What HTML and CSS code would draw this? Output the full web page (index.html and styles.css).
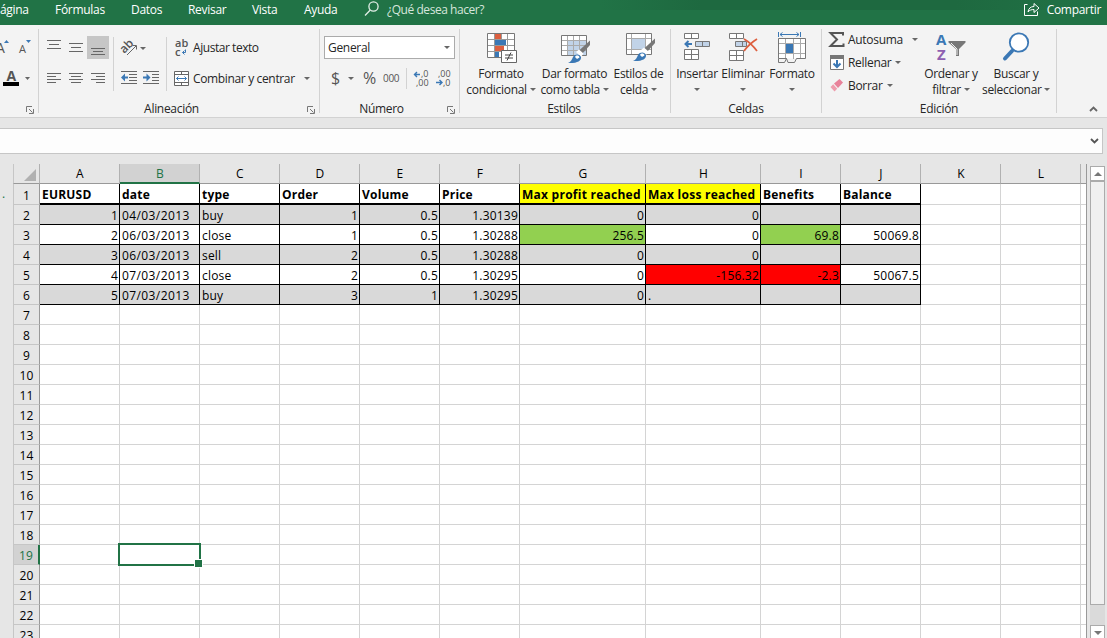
FILE: index.html
```html
<!DOCTYPE html>
<html lang="es">
<head>
<meta charset="utf-8">
<title>EURUSD</title>
<link rel="stylesheet" href="styles.css">
</head>

<body>

<div class="titleBar">
	<div class="tab tabPagina">ágina</div>
	<div class="tab tabFormulas">Fórmulas</div>
	<div class="tab tabDatos">Datos</div>
	<div class="tab tabRevisar">Revisar</div>
	<div class="tab tabVista">Vista</div>
	<div class="tab tabAyuda">Ayuda</div>
	<div class="tellMe">
		<svg width="16" height="18" fill="none" stroke="#e4efe8" stroke-width="1.3"><circle cx="9.5" cy="6.5" r="4.6"/><path d="M6.3 10 L1 15.5"/></svg>
		<span class="tellText">¿Qué desea hacer?</span>
	</div>
	<div class="share">
		<svg width="16" height="17" fill="none" stroke="#fff"><path d="M3.500 4.500H.5V15.500H13.500V11.500"/><path d="M4 12C4.500 8.500 6.500 6.500 10 6.500V3.500L15 8L10 12.500V9.500C7.500 9.500 5.500 10 4 12Z"/></svg>
		<span>Compartir</span>
	</div>
</div>

<div class="ribbon">

	<div class="group groupFont">
		<div class="fontRow">
			<svg width="38" height="24"><text x="-4" y="17" class="iconText" font-size="14">A</text><path d="M4 7 L6.500 4 L9 7 Z" fill="#3b78b5"/><text x="19" y="17" class="iconText" font-size="11">A</text><path d="M26 4 H31 L28.500 7 Z" fill="#3b78b5"/></svg>
			<svg width="38" height="24"><text x="6.500" y="15" class="iconText" font-size="14" font-weight="bold">A</text><path d="M3 16 H19 V20 H3 Z" fill="#000"/><path d="M25 11 H30 L27.500 14 Z" fill="#666"/></svg>
		</div>
		<div class="groupLabel"><span></span><svg class="launcher" width="8" height="8"><use href="#launch"/></svg></div>
	</div>

	<div class="group groupAlign">
		<div class="groupBody">
			<div class="alignIcons">
				<div class="iconCell"><svg width="14" height="16"><path class="ln" d="M0 .5H14M2 4.500H12M0 8.500H14"/></svg></div>
				<div class="iconCell"><svg width="14" height="16"><path class="ln" d="M0 3.500H14M2 7.500H12M0 11.500H14"/></svg></div>
				<div class="iconCell pressed"><svg width="14" height="16"><path class="ln" d="M0 8.500H14M2 11.500H12M0 14.500H14"/></svg></div>
				<div class="iconCell"><svg width="14" height="14"><path class="ln" d="M0 2.500H14M0 5.500H9M0 8.500H14M0 11.500H9"/></svg></div>
				<div class="iconCell"><svg width="14" height="14"><path class="ln" d="M0 2.500H14M2 5.500H12M0 8.500H14M2 11.500H12"/></svg></div>
				<div class="iconCell"><svg width="14" height="14"><path class="ln" d="M0 2.500H14M5 5.500H14M0 8.500H14M5 11.500H14"/></svg></div>
			</div>
			<div class="indentIcons">
				<div class="indentRow">
					<svg width="18" height="18"><text x="-1" y="11" class="iconText strong" font-size="12" transform="rotate(-45 6 8)">ab</text><path d="M6 16 L15 7 M11.500 6.500 H15.500 V10.500" fill="none" stroke="#666"/></svg>
					<i class="caret"></i>
				</div>
				<div class="indentRow indentLower">
					<svg width="17" height="14"><path class="ln" d="M0 .5H16M8 3.500H16M8 6.500H16M8 9.500H16M0 12.500H16"/><path d="M0 6.500 L4 2.500 V5.500 H7 V7.500 H4 V10.500Z" fill="#3b78b5"/></svg>
					<svg width="17" height="14" class="indentMore"><path class="ln" d="M0 .5H16M9 3.500H16M9 6.500H16M9 9.500H16M0 12.500H16"/><path d="M7.500 6.500 L3.500 2.500 V5.500 H0 V7.500 H3.500 V10.500Z" fill="#3b78b5"/></svg>
				</div>
			</div>
			<div class="wrapButtons">
				<div class="wrapRow"><svg width="17" height="18"><text class="iconText strong" font-size="11"><tspan x="2" y="8">ab</tspan><tspan x="2" y="17">c</tspan></text><path d="M12.500 10.500 V13.500 H9.500 M11.500 11.500 L9.500 13.500 L11.500 15.500" fill="none" stroke="#3b78b5"/></svg><span class="wrapText">Ajustar texto</span></div>
				<div class="wrapRow"><svg width="17" height="16"><path d="M1.500 .5H15.500V14.500H1.500ZM1.500 3.500H15.500M1.500 11.500H15.500M8.500 .5V3.500M8.500 11.500V14.500" fill="#fff" stroke="#666"/><path d="M3.500 7.500H13.500M5.500 5.500L3.500 7.500L5.500 9.500M11.500 5.500L13.500 7.500L11.500 9.500" fill="none" stroke="#3b78b5"/></svg><span class="mergeText">Combinar y centrar</span><i class="caret"></i></div>
			</div>
		</div>
		<div class="groupLabel"><span>Alineación</span><svg class="launcher" width="8" height="8"><use href="#launch"/></svg></div>
	</div>

	<div class="group groupNumber">
		<div class="numberBody">
			<div class="combo"><span>General</span><i class="caret"></i></div>
			<div class="numberIcons">
				<span class="dollar">$</span><i class="caret"></i><span class="percent">%</span><span class="thousands">000</span>
				<div class="decimals"><svg width="38" height="18"><text class="iconText" font-size="9"><tspan x="7" y="7">,0</tspan><tspan x="2" y="16">,00</tspan></text><path d="M.5 4.500H6M3 2L.5 4.500L3 7" class="blueLn"/><text class="iconText" font-size="9"><tspan x="24" y="7">,00</tspan><tspan x="29" y="16">,0</tspan></text><path d="M22 12.500H28M25.500 10L28 12.500L25.500 15" class="blueLn"/></svg></div>
			</div>
		</div>
		<div class="groupLabel"><span class="numLabel">Número</span><svg class="launcher" width="8" height="8"><use href="#launch"/></svg></div>
	</div>

	<div class="group groupStyles">
		<div class="bigButtons">
			<div class="bigButton wFormato">
				<svg width="30" height="32"><path d="M.5 1.500H27.500V25.500H.5Z" fill="#fff"/><path d="M.5 7.500H27.500M.5 13.500H27.500M.5 19.500H27.500M7.500 1.500V25.500M14.500 1.500V25.500M20.500 1.500V25.500" fill="none" stroke="#999"/><path d="M8 2H14V7H8ZM8 14H17V19H8Z" fill="#dd5f3f"/><path d="M8 8H19V13H8ZM8 20H12V25H8Z" fill="#3b78b5"/><path d="M.5 1.500H27.500V25.500H.5Z" fill="none" stroke="#777"/><path d="M14.500 18.500H29.500V30.500H14.500Z" fill="#fff" stroke="#666"/><path d="M18 23H26M18 26H26M24 20.500L20 28.500" stroke="#444" fill="none"/></svg>
				<div>Formato</div><div>condicional <i class="caret"></i></div>
			</div>
			<div class="bigButton wTabla">
				<svg width="30" height="32"><path d="M.5 3.500H25.500V23.500H.5Z" fill="#fff"/><path d="M7 9H25V23H7Z" fill="#c1d3e8"/><path d="M.5 8.500H25.500M.5 13.500H25.500M.5 18.500H25.500M6.500 3.500V23.500M12.500 3.500V23.500M18.500 3.500V23.500" stroke="#aaa"/><path d="M.5 3.500H25.500V23.500H.5Z" fill="none" stroke="#777"/><use href="#brush"/></svg>
				<div>Dar formato</div><div>como tabla <i class="caret"></i></div>
			</div>
			<div class="bigButton wEstilos">
				<svg width="30" height="32"><path d="M.5 1.500H25.500V22.500H.5Z" fill="#fff"/><path d="M6 7H19V17H6Z" fill="#c1d3e8"/><path d="M.5 6.500H25.500M.5 17.500H25.500M5.500 1.500V22.500M19.500 1.500V22.500" stroke="#aaa"/><path d="M.5 1.500H25.500V22.500H.5Z" fill="none" stroke="#777"/><use href="#brush" y="-2"/></svg>
				<div>Estilos de</div><div>celda <i class="caret"></i></div>
			</div>
		</div>
		<div class="groupLabel"><span>Estilos</span></div>
	</div>

	<div class="group groupCells">
		<div class="bigButtons">
			<div class="bigButton wInsertar">
				<svg width="27" height="32"><g fill="#fff" stroke="#777"><path d="M.5 1.500H14.500V6.500H.5ZM7.500 1.500V6.500M.5 17.500H14.500V27.500H.5ZM.5 22.500H14.500M7.500 17.500V27.500"/><path d="M11.500 9.500H25.500V14.500H11.500ZM18.500 9.500V14.500" fill="#c1d3e8"/></g><path d="M1.500 12H8M4.500 9L1.500 12L4.500 15" fill="none" stroke="#3b78b5" stroke-width="2"/></svg>
				<div>Insertar</div><div><i class="caret"></i></div>
			</div>
			<div class="bigButton wEliminar">
				<svg width="30" height="32"><g fill="#fff" stroke="#777"><path d="M1.500 1.500H15.500V6.500H1.500ZM8.500 1.500V6.500M1.500 18.500H15.500V28.500H1.500ZM1.500 23.500H15.500M8.500 18.500V28.500"/><path d="M7.500 9.500H18.500V14.500H7.500ZM14.500 9.500V14.500" fill="#c1d3e8"/></g><path d="M16 7Q23 11 29 19M29 7Q21 12 16 19" fill="none" stroke="#dd5f3f" stroke-width="1.800"/></svg>
				<div>Eliminar</div><div><i class="caret"></i></div>
			</div>
			<div class="bigButton wCelda">
				<svg width="29" height="32"><path d="M.5 6.500H27.500V26.500H.5Z" fill="#fff"/><path d="M0 11.500H27M0 21.500H27M7.500 7V27M15.500 7V27M22.500 7V27" stroke="#aaa"/><path d="M8 12H15V21H8Z" fill="#3b78b5"/><path d="M.5 6.500H27.500V26.500H18.500L16.500 30.500H10L8.500 26.500H.5ZM.5 26.500V30.500H6.500L8.500 26.500" fill="none" stroke="#777"/><path d="M.5 0V5M22.500 0V5M2 2.500H21M4.500 .5L2 2.500L4.500 4.500M18.500 .5L21 2.500L18.500 4.500" fill="none" stroke="#3b78b5"/></svg>
				<div>Formato</div><div><i class="caret"></i></div>
			</div>
		</div>
		<div class="groupLabel"><span>Celdas</span></div>
	</div>

	<div class="group groupEdit">
		<div class="groupBody">
			<div class="editList">
				<div class="editRow rowSum"><svg width="16" height="15"><path d="M15 3.500V1H2.500L9 7.500L2.500 14H15.500V11.500" fill="none" stroke="#555" stroke-width="2"/></svg><span>Autosuma</span><i class="caret"></i></div>
				<div class="editRow"><svg width="16" height="15"><path d="M2.500 .5H15.500V14.500H2.500Z" fill="#fff" stroke="#777"/><path d="M2 0H16V4H2Z" fill="#777"/><path d="M9 5V12M5.500 8.500L9 12L12.500 8.500" fill="none" stroke="#3b78b5" stroke-width="2"/></svg><span>Rellenar</span><i class="caret"></i></div>
				<div class="editRow"><svg width="16" height="15"><path d="M6 5.500L11.500 1L15 4.500L10 10Z" fill="#e8829a"/><path d="M5.200 6.300L9.200 10.800L6.500 13.500L2.500 9Z" fill="#ee9dad"/></svg><span>Borrar</span><i class="caret"></i></div>
			</div>
			<div class="bigButton wOrdenar">
				<svg width="31" height="32"><text class="iconText" font-size="15" font-weight="bold"><tspan x="0" y="13" class="letterA">A</tspan><tspan x="1" y="28" class="letterZ">Z</tspan></text><path d="M12.500 9H29.500V10.500L23 17V24H20V17L12.500 10.500Z" fill="#777"/><path d="M15 11L21 17V23" stroke="#eee" fill="none"/></svg>
				<div>Ordenar y</div><div>filtrar <i class="caret"></i></div>
			</div>
			<div class="bigButton wBuscar">
				<svg width="29" height="32"><path d="M3 26.500L10 19" stroke="#3b78b5" stroke-width="4" stroke-linecap="round"/><circle cx="17" cy="10.500" r="9.200" fill="#fff" stroke="#3b78b5" stroke-width="1.800"/></svg>
				<div>Buscar y</div><div>seleccionar <i class="caret"></i></div>
			</div>
		</div>
		<div class="groupLabel"><span>Edición</span></div>
	</div>

	<svg class="collapse" width="9" height="6"><path d="M1 5L4.500 1.500L8 5" fill="none" stroke="#666" stroke-width="1.800"/></svg>
</div>

<div class="formulaArea">
	<div class="formulaBar"><svg width="9" height="6"><path d="M1 1L4.500 4.500L8 1" fill="none" stroke="#555" stroke-width="1.800"/></svg></div>
</div>

<div class="sheetArea">
	<div class="leftStrip">.</div>
	<table class="sheet">
		<colgroup><col class="colHead"><col><col><col><col><col><col><col class="colG"><col class="colH"><col><col><col><col><col class="colEdge"></colgroup>
		<thead>
			<tr><th class="corner"><svg width="12" height="12"><path d="M12 0V12H0Z" fill="#b1b1b1"/></svg></th><th>A</th><th class="active">B</th><th>C</th><th>D</th><th>E</th><th>F</th><th>G</th><th>H</th><th>I</th><th>J</th><th>K</th><th>L</th><th></th></tr>
		</thead>
		<tbody id="sheetBody">
			<tr class="titles"><th>1</th><td>EURUSD</td><td>date</td><td>type</td><td>Order</td><td>Volume</td><td>Price</td><td class="yellow">Max profit reached</td><td class="yellow">Max loss reached</td><td>Benefits</td><td>Balance</td><td></td><td></td><td></td></tr>
			<tr class="data shaded"><th>2</th><td>1</td><td class="date">04/03/2013</td><td class="text">buy</td><td>1</td><td>0.5</td><td>1.30139</td><td>0</td><td>0</td><td></td><td></td><td></td><td></td><td></td></tr>
			<tr class="data"><th>3</th><td>2</td><td class="date">06/03/2013</td><td class="text">close</td><td>1</td><td>0.5</td><td>1.30288</td><td class="green">256.5</td><td>0</td><td class="green">69.8</td><td>50069.8</td><td></td><td></td><td></td></tr>
			<tr class="data shaded"><th>4</th><td>3</td><td class="date">06/03/2013</td><td class="text">sell</td><td>2</td><td>0.5</td><td>1.30288</td><td>0</td><td>0</td><td></td><td></td><td></td><td></td><td></td></tr>
			<tr class="data"><th>5</th><td>4</td><td class="date">07/03/2013</td><td class="text">close</td><td>2</td><td>0.5</td><td>1.30295</td><td>0</td><td class="red">-156.32</td><td class="red">-2.3</td><td>50067.5</td><td></td><td></td><td></td></tr>
			<tr class="data shaded"><th>6</th><td>5</td><td class="date">07/03/2013</td><td class="text">buy</td><td>3</td><td>1</td><td>1.30295</td><td>0</td><td class="text">.</td><td></td><td></td><td></td><td></td><td></td></tr>
		</tbody>
	</table>
	<div class="scrollBar">
		<div class="scrollButton"><i class="arrowUp"></i></div>
		<div class="thumb"></div>
		<div class="scrollButton scrollDown"><i class="arrowDown"></i></div>
	</div>
</div>

<svg class="defs" width="0" height="0">
	<defs>
		<g id="launch"><path d="M.5 6V.5H6M3 3L6.500 6.500M7.500 3V7.500H3" fill="none" stroke="#777"/></g>
		<g id="brush"><path d="M29 8.500V13L21 22L17.500 19Z" fill="#777"/><path d="M15 20L18 17.500L22.500 21.500L20 25Z" fill="#fff"/><path d="M7 31C10 30 11 27 12 25C14 21.500 19 22 20 25C20.500 29 16 31.500 7 31Z" fill="#3b78b5"/><path d="M14 25C15 23 18 23 18.500 25.500L16 27Z" fill="#fff"/></g>
	</defs>
</svg>

<script>

	// empty rows below the data
	var body = document.getElementById("sheetBody");
	for (var r = 7; r <= 23; r++) {
		var row = body.insertRow();
		var head = document.createElement("th");
		head.textContent = r;
		row.appendChild(head);
		for (var c = 1; c <= 13; c++) {
			var cell = row.insertCell();
			if (r == 19 && c == 2) {
				head.className = "active";
				cell.className = "selected";
				cell.innerHTML = '<div class="selection"></div>';
			}
		}
	}

</script>

</body>
</html>
```
FILE: styles.css
```css
* {
	box-sizing: border-box;
}

body {
	margin: 0;
	height: 638px;
	overflow: hidden;
	background: #e6e6e6;
	font-family: "Open Sans", "Noto Sans", sans-serif;
	font-size: 12px;
	letter-spacing: -0.3px;
	color: #262626;
}

svg {
	display: block;
	flex: none;
	overflow: visible;
}

.defs {
	display: none;
}

/* title bar */

.titleBar {
	display: flex;
	height: 25px;
	line-height: 19px;
	color: #fff;
	white-space: nowrap;
	background: linear-gradient(90deg, #217346, #1e6940 20%, #1e6940 70%, #217346) 600px 0 / 507px 10px no-repeat #217346;
}

.tabPagina { width: 55px; }
.tabFormulas { width: 76px; }
.tabDatos { width: 57px; }
.tabRevisar { width: 64px; }
.tabVista { width: 52px; }
.tabAyuda { width: 60px; }

.tellMe {
	display: flex;
	gap: 7px;
	color: #d6e6dc;
}

.tellText {
	letter-spacing: -0.45px;
}

.share {
	display: flex;
	gap: 7px;
	margin-left: auto;
	padding-right: 6px;
}

/* ribbon */

.ribbon {
	display: flex;
	height: 93px;
	background: #f3f3f3;
	border-bottom: 1px solid #d2d2d2;
}

.group {
	display: flex;
	flex-direction: column;
	flex: none;
	height: 84px;
	margin-top: 4px;
	border-right: 1px solid #d2d2d2;
	white-space: nowrap;
}

.groupFont { width: 39px; }
.groupAlign { width: 281px; }
.groupNumber { width: 140px; }
.groupStyles { width: 211px; }
.groupCells { width: 151px; }
.groupEdit { width: 235px; }

.groupBody {
	display: flex;
	flex: none;
	height: 71px;
}

.groupLabel {
	display: flex;
	flex: none;
	align-items: center;
	height: 18px;
	line-height: 18px;
}

.groupLabel span {
	flex: 1;
	text-align: center;
}

.groupAlign .groupLabel span {
	padding-right: 3px;
}

.groupLabel .numLabel {
	padding-right: 4px;
}

.groupStyles .groupLabel {
	padding-right: 2px;
}

.launcher {
	margin: 1px 4px 0 0;
}

.caret {
	display: inline-block;
	flex: none;
	width: 0;
	height: 0;
	border: 3px solid transparent;
	border-top-color: #666;
	border-bottom: 0;
	vertical-align: 2px;
}

.iconText {
	fill: #555;
	letter-spacing: 0;
}

.strong {
	font-weight: 600;
}

.ln {
	fill: none;
	stroke: #666;
}

.blueLn {
	fill: none;
	stroke: #3b78b5;
	stroke-width: 1.4;
}

.fontRow {
	display: flex;
	flex-direction: column;
	flex: none;
	gap: 6px;
	height: 71px;
	padding-top: 7px;
}

.alignIcons {
	display: grid;
	grid-template-columns: repeat(3, 22px);
	grid-template-rows: 23px 23px;
	row-gap: 7px;
	height: 60px;
	margin: 7px 0 0 4px;
}

.iconCell {
	display: flex;
	align-items: center;
	justify-content: center;
}

.pressed {
	background: #c6c6c6;
}

.indentIcons {
	width: 54px;
	height: 54px;
	margin: 8px 0 0 4px;
	padding-left: 7px;
	border-left: 1px solid #d2d2d2;
	border-right: 1px solid #d2d2d2;
}

.indentRow {
	display: flex;
	align-items: center;
	height: 22px;
	margin-bottom: 9px;
}

.indentRow .caret {
	margin-left: 1px;
}

.indentLower {
	height: 20px;
}

.indentMore {
	margin-left: 5px;
}

.wrapButtons {
	padding: 7px 0 0 6px;
}

.wrapRow {
	display: flex;
	align-items: center;
	height: 23px;
	margin-bottom: 8px;
	gap: 3px;
}

.wrapText {
	letter-spacing: -0.45px;
}

.mergeText {
	letter-spacing: -0.35px;
}

.wrapRow .caret {
	margin-left: 6px;
}

/* number group */

.numberBody {
	flex: none;
	height: 71px;
	padding: 7px 0 0 4px;
}

.combo {
	display: flex;
	align-items: center;
	justify-content: space-between;
	width: 131px;
	height: 23px;
	padding: 0 4px 0 3px;
	background: #fff;
	border: 1px solid #ababab;
}

.numberIcons {
	display: flex;
	align-items: center;
	height: 38px;
	color: #555;
}

.dollar {
	width: 24px;
	padding-left: 7px;
	font-size: 16px;
}

.percent {
	width: 21px;
	padding-left: 9px;
	font-size: 16px;
}

.thousands {
	width: 31px;
	padding-left: 8px;
	font-size: 10px;
}

.decimals {
	height: 21px;
	padding: 2px 0 0 7px;
	border-left: 1px solid #d2d2d2;
}

/* large buttons */

.bigButtons {
	display: flex;
	flex: none;
	height: 71px;
	padding-left: 4px;
}

.bigButton {
	flex: none;
	padding-top: 3px;
	line-height: 16px;
	text-align: center;
}

.bigButton svg {
	margin: 0 auto 2px;
}

.bigButton .caret {
	vertical-align: 3px;
}

.wFormato { width: 74px; }
.wTabla { width: 73px; }
.wEstilos { width: 55px; }
.wInsertar { width: 44px; }
.wEliminar { width: 48px; }
.wCelda { width: 50px; }
.wOrdenar { width: 62px; }
.wBuscar { width: 68px; }

.wFormato svg { margin-left: 23px; }
.wTabla svg { margin-left: 23px; }
.wEstilos svg { margin-left: 15px; }

.editList {
	width: 98px;
	padding-left: 6px;
}

.editRow {
	display: flex;
	align-items: center;
	height: 23px;
	gap: 4px;
}

.editList .rowSum {
	height: 21px;
	margin-bottom: 1px;
}

.rowSum .caret {
	margin-left: 5px;
}

.letterA {
	fill: #3b78b5;
}

.letterZ {
	fill: #8e5fb0;
}

.collapse {
	margin: 81px 0 0 32px;
}

/* formula bar */

.formulaArea {
	height: 46px;
	padding: 10px 4px 0 0;
}

.formulaBar {
	display: flex;
	align-items: center;
	justify-content: flex-end;
	height: 26px;
	padding-right: 3px;
	background: #fdfdfd;
	border: 1px solid #c6c6c6;
	border-left: 0;
}

/* sheet */

.sheetArea {
	display: flex;
	height: 474px;
}

.leftStrip {
	width: 13px;
	flex: none;
	padding: 21px 0 0 2px;
	color: #217346;
}

.sheet {
	flex: none;
	align-self: flex-start;
	width: 1074px;
	table-layout: fixed;
	border-collapse: separate;
	border-spacing: 0;
	border-right: 1px solid #999;
	font-family: "Open Sans", "Noto Sans", sans-serif;
	font-size: 12px;
	letter-spacing: 0.2px;
	color: #000;
}

.sheet col { width: 80px; }
.sheet .colHead { width: 27px; }
.sheet .colG { width: 126px; }
.sheet .colH { width: 115px; }
.sheet .colEdge { width: 5px; }

.sheet th,
.sheet td {
	height: 20px;
	padding: 2px 1px 0 2px;
	overflow: hidden;
	line-height: 17px;
	white-space: nowrap;
	text-align: right;
	background: #fff;
	border-right: 1px solid #d4d4d4;
	border-bottom: 1px solid #d4d4d4;
}

.sheet th {
	padding: 2px 0 0;
	text-align: center;
	font-weight: normal;
	background: #e6e6e6;
	border-right-color: #b1b1b1;
}

.sheet thead th {
	padding: 0 0 0 1px;
	line-height: 18px;
	border-bottom-color: #999;
}

.sheet tbody th {
	border-left: 1px solid #c6c6c6;
	border-right-color: #999;
	border-bottom-color: #c6c6c6;
}

.sheet .corner {
	border-left: 1px solid #c6c6c6;
}

.sheet th:last-child,
.sheet td:last-child {
	border-right: 0;
}

.corner svg {
	margin: 2px 0 0 9px;
}

.sheet th.active {
	color: #217346;
	background: #d2d2d2;
}

.sheet thead th.active {
	line-height: 17px;
	border-bottom: 2px solid #217346;
}

.sheet tbody th.active {
	border-right: 2px solid #217346;
}

.sheet .titles th,
.sheet .titles td {
	height: 21px;
	text-align: left;
	font-weight: bold;
}

.sheet .titles th {
	text-align: center;
	font-weight: normal;
}

/* black frame around A1:J6 */

.titles td:nth-child(-n+11),
.data td:nth-child(-n+11) {
	border-color: #000;
}

.titles td:nth-child(-n+11) {
	border-bottom: 2px solid #000;
}

.shaded td:nth-child(-n+11) {
	background: #d9d9d9;
}

.sheet .text { text-align: left; }
.sheet .date { text-align: left; letter-spacing: 0.4px; }
.sheet .yellow { background: #ff0; letter-spacing: 0.25px; }
.sheet .green { background: #92d050; }
.sheet .red { background: #f00; }

.sheet .selected {
	position: relative;
	overflow: visible;
}

.selection {
	position: absolute;
	inset: -2px;
	border: 2px solid #217346;
}

.selection::after {
	content: "";
	position: absolute;
	right: -4px;
	bottom: -4px;
	width: 7px;
	height: 7px;
	background: #217346;
	border: 1px solid #fff;
}

/* scroll bar */

.scrollBar {
	display: flex;
	flex-direction: column;
	width: 15px;
	height: 474px;
	margin-left: 3px;
	padding-top: 2px;
	background: linear-gradient(#e6e6e6 2px, #dadada 2px);
}

.scrollButton {
	display: flex;
	align-items: center;
	justify-content: center;
	height: 15px;
	flex: none;
	background: #fff;
	border: 1px solid #ababab;
}

.scrollDown {
	margin-top: 20px;
}

.thumb {
	height: 424px;
	flex: none;
	background: #f0f0f0;
	border: 1px solid #ababab;
}

.arrowUp,
.arrowDown {
	border: 4px solid transparent;
	border-top: 0;
	border-bottom-color: #777;
}

.arrowDown {
	border-top: 4px solid #777;
	border-bottom: 0;
}
```
